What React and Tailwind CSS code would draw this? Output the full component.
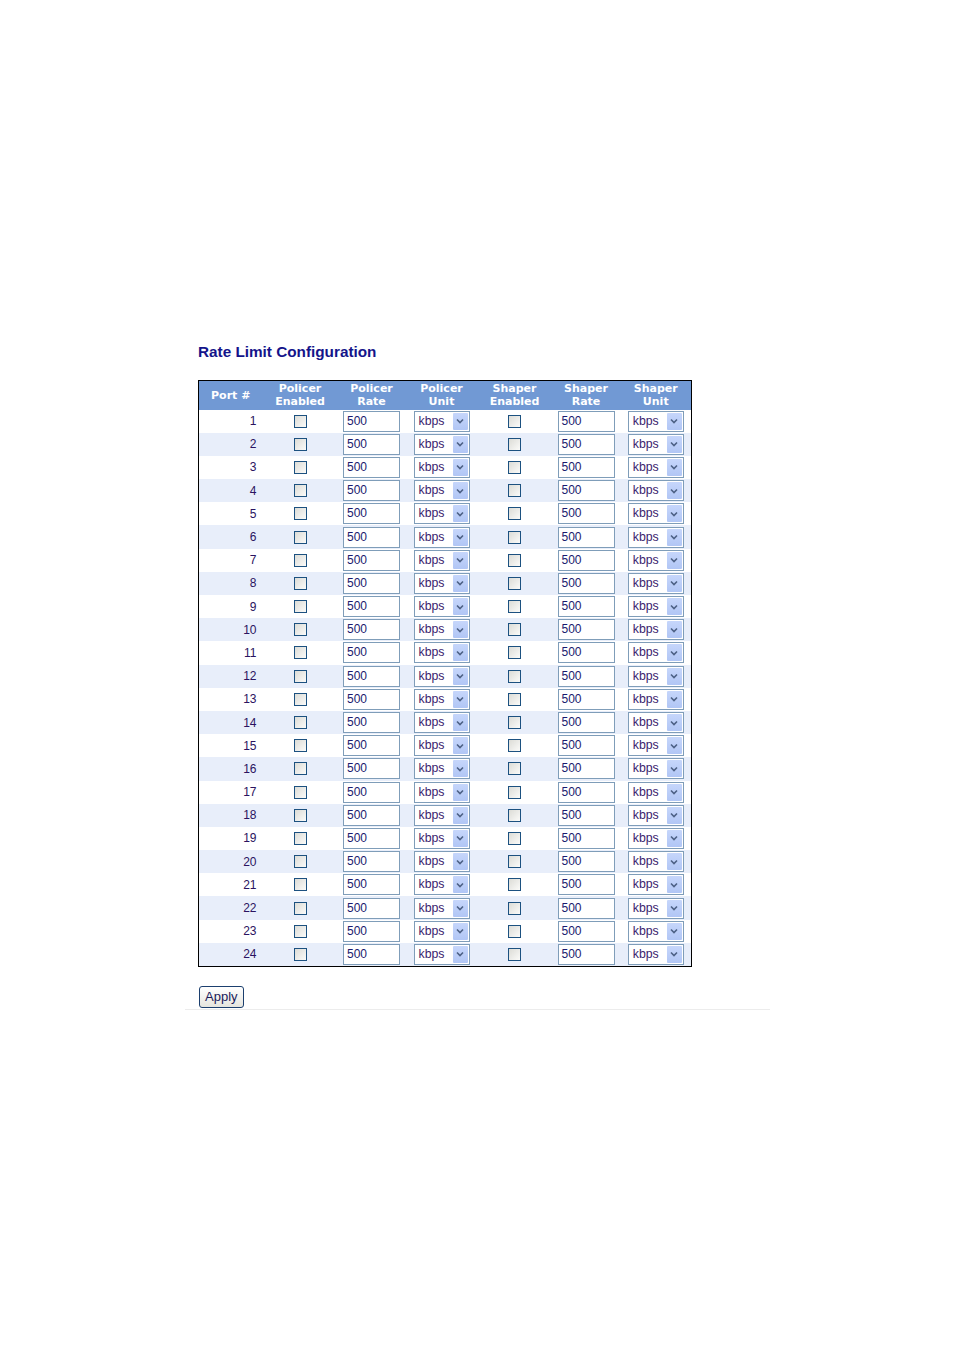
const cols = [
  { w: 'w-[64px]', label: ['Port #'] },
  { w: 'w-[75px]', label: ['Policer', 'Enabled'] },
  { w: 'w-[68px]', label: ['Policer', 'Rate'] },
  { w: 'w-[72px]', label: ['Policer', 'Unit'] },
  { w: 'w-[74px]', label: ['Shaper', 'Enabled'] },
  { w: 'w-[69px]', label: ['Shaper', 'Rate'] },
  { w: 'w-[71px]', label: ['Shaper', 'Unit'] },
]

const ports = Array.from({ length: 24 }, (_, i) => i + 1)

function Check() {
  return (
    <span className="block mx-auto w-[13px] h-[13px] border border-[#1c5180] bg-gradient-to-br from-[#dcdcd7] to-[#fbfbf9]" />
  )
}

function RateBox() {
  return (
    <div className="mx-auto w-[57px] h-[21px] border border-[#7f9db9] bg-white text-left pl-[3px] leading-[19px] text-[12px] text-[#1a1a6e]">
      500
    </div>
  )
}

function UnitSelect() {
  return (
    <div className="mx-auto w-[56px] h-[21px] border border-[#7f9db9] bg-white flex items-center justify-between pl-[4px] pr-[1px] text-[12.3px] text-[#3a1d6e]">
      <span className="leading-[19px]">kbps</span>
      <span className="w-[15px] h-[17px] bg-gradient-to-b from-[#c6d6fb] to-[#b1c6f5] rounded-[1px] flex items-center justify-center">
        <svg width="8" height="6" viewBox="0 0 8 6">
          <path d="M1 1.5 L4 4.5 L7 1.5" fill="none" stroke="#4d6185" strokeWidth="1.6" />
        </svg>
      </span>
    </div>
  )
}

export default function App() {
  return (
    <div className="min-h-[1349px] bg-white font-['Liberation_Sans',Arial,sans-serif]">
      <div className="pt-[342px] pl-[198px]">
        <h1 className="text-[15.3px] font-bold text-[#14148a] leading-[20px]">Rate Limit Configuration</h1>
        <table className="mt-[18px] border-collapse border border-black text-[12px]">
          <thead>
            <tr className="bg-[#7199d4] h-[29px]">
              {cols.map((c, i) => (
                <th key={i} className={`${c.w} p-0 text-white font-bold font-['DejaVu_Sans',Verdana,sans-serif] text-[11px] leading-[13px] text-center align-middle`}>
                  {c.label.map((l) => (
                    <div key={l}>{l}</div>
                  ))}
                </th>
              ))}
            </tr>
          </thead>
          <tbody>
            {ports.map((p) => (
              <tr key={p} className={`h-[23.2px] ${p % 2 === 0 ? 'bg-[#e8eefa]' : 'bg-white'}`}>
                <td className="p-0 pr-[6px] text-right text-[#2a1360]">{p}</td>
                <td className="p-0"><Check /></td>
                <td className="p-0"><RateBox /></td>
                <td className="p-0"><UnitSelect /></td>
                <td className="p-0"><Check /></td>
                <td className="p-0"><RateBox /></td>
                <td className="p-0"><UnitSelect /></td>
              </tr>
            ))}
          </tbody>
        </table>
        <button className="mt-[19px] ml-[1px] h-[22px] px-[5px] rounded-[3px] border border-[#1c3f6e] bg-gradient-to-b from-white to-[#e6e5de] text-[13px] text-[#1a1a5a] leading-[18px]">
          Apply
        </button>
      </div>
      <div className="ml-[185px] mt-[1px] w-[585px] h-px bg-[#ececec]" />
    </div>
  )
}
